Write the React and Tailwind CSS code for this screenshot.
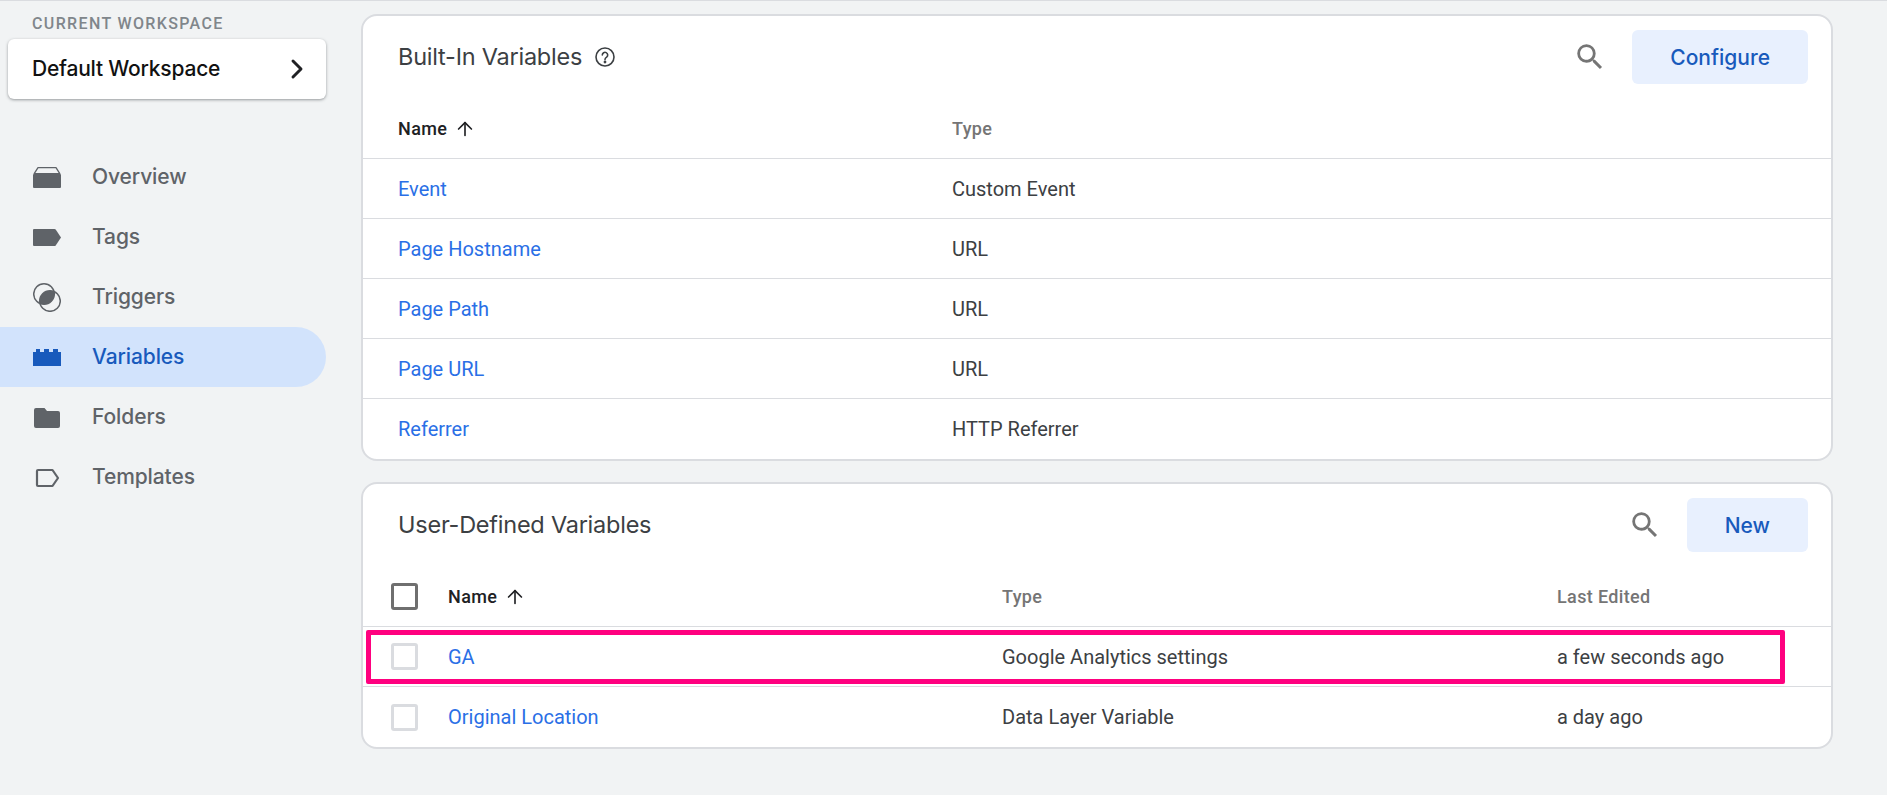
import { ChevronRight, ArrowUp } from 'lucide-react'

const NAV = [
  { label: 'Overview', icon: OverviewIcon },
  { label: 'Tags', icon: TagIcon },
  { label: 'Triggers', icon: TriggerIcon },
  { label: 'Variables', icon: VariableIcon, active: true },
  { label: 'Folders', icon: FolderIcon },
  { label: 'Templates', icon: TemplateIcon },
]

const BUILT_IN = [
  ['Event', 'Custom Event'],
  ['Page Hostname', 'URL'],
  ['Page Path', 'URL'],
  ['Page URL', 'URL'],
  ['Referrer', 'HTTP Referrer'],
]

const USER_DEFINED = [
  ['GA', 'Google Analytics settings', 'a few seconds ago'],
  ['Original Location', 'Data Layer Variable', 'a day ago'],
]

function OverviewIcon() {
  return (
    <svg width="28" height="30" viewBox="0 0 28 30" fill="currentColor">
      <path d="M5 5.700h18l3.800 6H1.200z" fill="none" stroke="currentColor" strokeWidth="1.300" strokeLinejoin="round" />
      <path d="M1 12h26a1 1 0 0 1 1 1v12a1 1 0 0 1-1 1H1a1 1 0 0 1-1-1V13a1 1 0 0 1 1-1z" />
    </svg>
  )
}

function TagIcon() {
  return (
    <svg width="28" height="30" viewBox="0 0 28 30" fill="currentColor">
      <path d="M1 7h20.500a1.500 1.500 0 0 1 1.200.6L28 15.500l-5.300 7.900a1.500 1.500 0 0 1-1.200.6H1a1 1 0 0 1-1-1V8a1 1 0 0 1 1-1z" />
    </svg>
  )
}

function TriggerIcon() {
  return (
    <svg width="28" height="30" viewBox="0 0 28 30">
      <defs>
        <clipPath id="trigger-lens">
          <circle cx="11" cy="12" r="10.300" />
        </clipPath>
      </defs>
      <circle cx="17" cy="19" r="10.300" fill="currentColor" clipPath="url(#trigger-lens)" />
      <circle cx="11" cy="12" r="10.300" fill="none" stroke="currentColor" strokeWidth="1.500" />
      <circle cx="17" cy="19" r="10.300" fill="none" stroke="currentColor" strokeWidth="1.500" />
    </svg>
  )
}

function VariableIcon() {
  return (
    <svg width="28" height="30" viewBox="0 0 28 30" fill="currentColor">
      <path d="M3 7h4v3h4V7h5v3h4V7h5v3h3v14H0V10h3z" />
    </svg>
  )
}

function FolderIcon() {
  return (
    <svg width="28" height="30" viewBox="0 0 28 30" fill="currentColor">
      <path d="M3 6h8.500l2.500 3h11a2 2 0 0 1 2 2v13a2 2 0 0 1-2 2H3a2 2 0 0 1-2-2V8a2 2 0 0 1 2-2z" />
    </svg>
  )
}

function TemplateIcon() {
  return (
    <svg width="28" height="30" viewBox="0 0 28 30" fill="none" stroke="currentColor" strokeWidth="2.200" strokeLinejoin="round">
      <path d="M5 8h14.500l5.500 8-5.500 8H5a1 1 0 0 1-1-1V9a1 1 0 0 1 1-1z" />
    </svg>
  )
}

function HelpIcon() {
  return (
    <svg width="20" height="20" viewBox="0 0 20 20" fill="none" stroke="#3c4043" strokeWidth="1.600">
      <circle cx="10" cy="10" r="9" />
      <path d="M7.300 8a2.700 2.700 0 1 1 4.300 2.200c-1 .7-1.600 1.200-1.600 2.300" strokeLinecap="round" />
      <circle cx="10" cy="15" r=".6" fill="#3c4043" />
    </svg>
  )
}

function SearchIcon() {
  return (
    <svg width="34" height="34" viewBox="0 0 24 24" fill="#757575">
      <path d="M15.500 14h-.79l-.28-.27A6.471 6.471 0 0 0 16 9.500 6.500 6.500 0 1 0 9.500 16c1.610 0 3.090-.59 4.230-1.570l.27.28v.79l5 4.990L20.490 19l-4.990-5zm-6 0C7.010 14 5 11.990 5 9.500S7.010 5 9.500 5 14 7.010 14 9.500 11.990 14 9.500 14z" />
    </svg>
  )
}

function Sidebar() {
  return (
    <aside className="w-[361px] shrink-0">
      <p className="pl-[32px] pt-[14px] h-[38px] text-[16px] leading-[18px] tracking-[0.085em] text-[#80868b] font-['Roboto',sans-serif] font-medium">
        CURRENT WORKSPACE
      </p>
      <div className="ml-[8px] w-[318px] h-[60px] bg-white rounded-[6px] shadow-[0_1px_3px_rgba(60,64,67,0.5)] flex items-center justify-between pl-[24px] pr-[13px] text-[#111] text-[21px] font-['Inter',sans-serif] font-medium">
        <span className="tracking-[-0.01em]">Default Workspace</span>
        <ChevronRight size={32} strokeWidth={2.200} className="text-[#202124]" />
      </div>
      <nav className="mt-[48px]">
        {NAV.map(({ label, icon: Icon, active }) => (
          <div
            key={label}
            className={`w-[326px] h-[60px] pl-[33px] flex items-center gap-[31px] rounded-r-[30px] text-[21px] font-['Inter',sans-serif] font-medium tracking-[-0.005em] ${active ? 'bg-[#d2e3fc] text-[#185abc]' : 'text-[#5f6368]'}`}
          >
            <Icon />
            <span>{label}</span>
          </div>
        ))}
      </nav>
    </aside>
  )
}

function Card({ children, className = '' }) {
  return (
    <section className={`w-[1472px] bg-white rounded-[16px] border-2 border-[#dadce0] overflow-hidden ${className}`}>
      {children}
    </section>
  )
}

function CardHeader({ title, help, button }) {
  return (
    <div className="h-[85px] pl-[35px] pr-[23px] pt-[14px] pb-[17px] flex items-center gap-[13px]">
      <h2 className="text-[23.500px] text-[#3c4043] font-['Inter',sans-serif] font-normal tracking-[-0.01em]">{title}</h2>
      {help && <HelpIcon />}
      <div className="ml-auto flex items-center gap-[25px]">
        <SearchIcon />
        <button className="h-[54px] px-[38px] pt-[2px] rounded-[6px] bg-[#e8f0fe] text-[#185abc] text-[21px] font-['Inter',sans-serif] font-medium">
          {button}
        </button>
      </div>
    </div>
  )
}

function Checkbox({ strong }) {
  return (
    <span className={`block w-[27px] h-[27px] rounded-[3px] border-[3px] ${strong ? 'border-[#6f6f6f]' : 'border-[#dadce0]'}`} />
  )
}

function NameHeader() {
  return (
    <span className="flex items-center gap-[7px] text-[#202124] font-medium">
      Name <ArrowUp size={22} strokeWidth={1.800} className="text-[#202124]" />
    </span>
  )
}

function BuiltInVariables() {
  return (
    <Card className="h-[447px] mt-[13px]">
      <CardHeader title="Built-In Variables" help button="Configure" />
      <div className="h-[58px] pl-[35px] pb-[2px] flex items-center border-b border-[#dadce0] text-[18px] tracking-[0.02em] font-['Roboto',sans-serif]">
        <div className="w-[554px]"><NameHeader /></div>
        <span className="text-[#757575] font-medium">Type</span>
      </div>
      {BUILT_IN.map(([name, type], i) => (
        <div
          key={name}
          className={`h-[60px] pl-[35px] flex items-center text-[20px] font-['Roboto',sans-serif] ${i < BUILT_IN.length - 1 ? 'border-b border-[#dadce0]' : ''}`}
        >
          <a className="w-[554px] text-[#2a6fe6]">{name}</a>
          <span className="text-[#3c4043]">{type}</span>
        </div>
      ))}
    </Card>
  )
}

function UserDefinedVariables() {
  return (
    <Card className="h-[267px] mt-[21px]">
      <CardHeader title="User-Defined Variables" button="New" />
      <div className="h-[58px] pl-[28px] pb-[2px] flex items-center border-b border-[#dadce0] text-[18px] tracking-[0.02em] font-['Roboto',sans-serif]">
        <div className="w-[57px]"><Checkbox strong /></div>
        <div className="w-[554px]"><NameHeader /></div>
        <span className="w-[555px] text-[#757575] font-medium">Type</span>
        <span className="text-[#757575] font-medium">Last Edited</span>
      </div>
      {USER_DEFINED.map(([name, type, edited], i) => (
        <div
          key={name}
          className={`h-[60px] pl-[28px] flex items-center text-[20px] font-['Roboto',sans-serif] ${i === 0 ? 'border-b border-[#dadce0]' : ''}`}
        >
          <div className="w-[57px]"><Checkbox /></div>
          <a className="w-[554px] text-[#2a6fe6]">{name}</a>
          <span className="w-[555px] text-[#3c4043]">{type}</span>
          <span className="text-[#3c4043]">{edited}</span>
        </div>
      ))}
    </Card>
  )
}

export default function App() {
  return (
    <div className="relative w-[1887px] h-[795px] overflow-hidden bg-[#f1f3f4] border-t border-[#dadce0] flex">
      <Sidebar />
      <main>
        <BuiltInVariables />
        <UserDefinedVariables />
      </main>
      {/* pink annotation round the GA row */}
      <div className="absolute left-[366px] top-[629px] w-[1419px] h-[54px] border-[5px] border-[#ff007f] rounded-[2px]" />
    </div>
  )
}
